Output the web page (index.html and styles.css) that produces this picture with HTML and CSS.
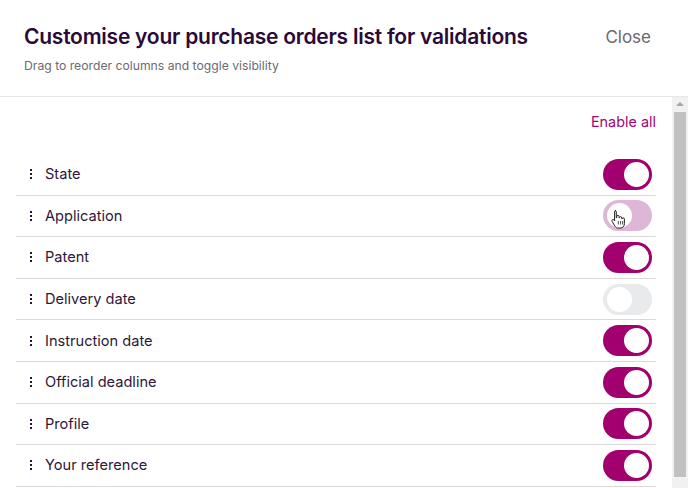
FILE: index.html
```html
<!DOCTYPE html>
<html lang="en">
<head>
	<meta charset="UTF-8">
	<title>Customise columns</title>
	<link rel="stylesheet" href="styles.css">
</head>

<body>
	<div class="cc-modal">
		<div class="cc-header">
			<div class="cc-header-text">
				<h1 class="cc-title">Customise your purchase orders list for validations</h1>
				<p class="cc-subtitle">Drag to reorder columns and toggle visibility</p>
			</div>
			<a href="javascript:;" class="cc-close">Close</a>
		</div>

		<div class="cc-body">
			<div class="cc-content">
				<div class="cc-actions">
					<a href="javascript:;" class="cc-enable-all">Enable all</a>
				</div>

				<ul class="cc-list">
					<li class="cc-row">
						<span class="cc-handle"><i></i><i></i><i></i></span>
						<span class="cc-label">State</span>
						<span class="cc-toggle cc-on"></span>
					</li>
					<li class="cc-row">
						<span class="cc-handle"><i></i><i></i><i></i></span>
						<span class="cc-label">Application</span>
						<span class="cc-toggle cc-hover">
							<svg class="cc-cursor" width="14" height="20" viewBox="0 0 14 20">
								<path d="M4 1.5c.8 0 1.3.6 1.3 1.4v6l.4-.1V7.6c0-.8.5-1.3 1.2-1.3s1.2.5 1.2 1.3v1.3l.3-.1c0-.7.5-1.2 1.2-1.2s1.2.5 1.2 1.3v1l.3-.1c.1-.6.5-1 1.1-1 .7 0 1.2.5 1.2 1.3v4.6c0 2.6-1.7 4.4-4.3 4.4H7.3c-1.5 0-2.5-.6-3.3-1.8L1.1 12.4c-.4-.7-.2-1.4.4-1.8.6-.3 1.2-.1 1.6.5l.5.9V2.9c0-.8.5-1.4 1.2-1.4z" fill="#fff" stroke="#222" stroke-width="1"/>
								<path d="M7.3 12v3.5M9.6 12v3.5M11.7 12v3.5" stroke="#222" stroke-width="0.8"/>
							</svg>
						</span>
					</li>
					<li class="cc-row">
						<span class="cc-handle"><i></i><i></i><i></i></span>
						<span class="cc-label">Patent</span>
						<span class="cc-toggle cc-on"></span>
					</li>
					<li class="cc-row">
						<span class="cc-handle"><i></i><i></i><i></i></span>
						<span class="cc-label">Delivery date</span>
						<span class="cc-toggle"></span>
					</li>
					<li class="cc-row">
						<span class="cc-handle"><i></i><i></i><i></i></span>
						<span class="cc-label">Instruction date</span>
						<span class="cc-toggle cc-on"></span>
					</li>
					<li class="cc-row">
						<span class="cc-handle"><i></i><i></i><i></i></span>
						<span class="cc-label">Official deadline</span>
						<span class="cc-toggle cc-on"></span>
					</li>
					<li class="cc-row">
						<span class="cc-handle"><i></i><i></i><i></i></span>
						<span class="cc-label">Profile</span>
						<span class="cc-toggle cc-on"></span>
					</li>
					<li class="cc-row">
						<span class="cc-handle"><i></i><i></i><i></i></span>
						<span class="cc-label">Your reference</span>
						<span class="cc-toggle cc-on"></span>
					</li>
				</ul>
			</div>

			<div class="cc-scrollbar">
				<span class="cc-scroll-arrow"></span>
				<span class="cc-scroll-thumb"></span>
			</div>
		</div>
	</div>
</body>
</html>
```

FILE: styles.css
```css
html, body {
	margin: 0;
	padding: 0;
	height: 100%;
	overflow: hidden;
	background: #fff;
	font-family: Inter, 'Noto Sans', sans-serif;
	color: #2b1237;
}

.cc-modal {
	height: 488px;
	display: flex;
	flex-direction: column;
}

.cc-header {
	height: 97px;
	box-sizing: border-box;
	padding: 24px 37px 0 24px;
	border-bottom: 1px solid #e8e8ea;
	display: flex;
	justify-content: space-between;
	align-items: flex-start;
	flex-shrink: 0;
}

.cc-title {
	margin: 0;
	font-size: 21px;
	line-height: 26px;
	font-weight: 600;
	color: #2a0a37;
	letter-spacing: -0.24px;
}

.cc-subtitle {
	margin: 9px 0 0;
	font-size: 12.2px;
	line-height: 14px;
	color: #6c6a72;
}

.cc-close {
	font-size: 17px;
	line-height: 26px;
	color: #6a6870;
	text-decoration: none;
}

.cc-body {
	flex: 1;
	display: flex;
	overflow: hidden;
}

.cc-content {
	flex: 1;
	padding: 0 16px;
}

.cc-scrollbar {
	width: 16px;
	background: #f1f1f1;
	display: flex;
	flex-direction: column;
	align-items: center;
}

.cc-scroll-arrow {
	margin-top: 5px;
	width: 0;
	height: 0;
	border-left: 4px solid transparent;
	border-right: 4px solid transparent;
	border-bottom: 4px solid #a3a3a3;
}

.cc-scroll-thumb {
	margin-top: 6px;
	width: 12px;
	height: 365px;
	background: #c1c1c1;
}

.cc-actions {
	display: flex;
	justify-content: flex-end;
	padding-top: 15px;
	height: 57px;
	box-sizing: border-box;
}

.cc-enable-all {
	font-size: 14.4px;
	line-height: 20px;
	color: #a3067a;
	text-decoration: none;
}

.cc-list {
	list-style: none;
	margin: 0;
	padding: 0;
}

.cc-row {
	height: 41.6px;
	box-sizing: border-box;
	display: flex;
	align-items: center;
	border-bottom: 1px solid #d9d9dc;
}

.cc-handle {
	width: 29px;
	display: flex;
	flex-direction: column;
	align-items: center;
	gap: 2px;
}

.cc-handle i {
	width: 2px;
	height: 2px;
	background: #2b1237;
}

.cc-label {
	flex: 1;
	font-size: 14.6px;
	color: #2e1639;
}

.cc-toggle {
	position: relative;
	width: 49px;
	height: 31px;
	border-radius: 16px;
	background: #e9eaec;
	margin-right: 4px;
}

.cc-toggle::after {
	content: '';
	position: absolute;
	top: 3px;
	left: 4px;
	width: 25px;
	height: 25px;
	border-radius: 50%;
	background: #fff;
}

.cc-on {
	background: #a1006e;
}

.cc-on::after {
	left: 21px;
}

.cc-hover {
	background: #dfb7d6;
}

.cc-cursor {
	position: absolute;
	left: 8px;
	top: 9px;
	z-index: 1;
}
```
